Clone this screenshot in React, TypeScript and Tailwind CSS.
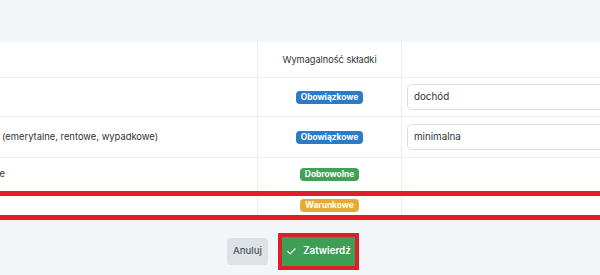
import React from "react";
import { Check } from "lucide-react";

function Badge({ label, color }: { label: string; color: string }) {
  return (
    <span
      className={`${color} text-white text-[8.4px] font-bold leading-[13px] h-[13px] px-[5px] rounded-[4px] whitespace-nowrap`}>
      {label}
    </span>
  );
}

function Field({ value }: { value: string }) {
  return (
    <div className="ml-[5px] w-[220px] h-[26px] shrink-0 flex items-center px-[6px] border border-[#d9dee3] rounded-[5px] bg-white text-[9.8px] text-[#2f3337]">
      {value}
    </div>
  );
}

// tekst z pierwszej kolumny: koniec widoczny od lewej krawędzi
function Cut({ hidden, shown, edge }: { hidden: string; shown?: string; edge: string }) {
  return (
    <div className="flex items-center whitespace-nowrap text-[9.4px] text-[#2f3337]">
      <div className={`${edge} flex justify-end`}>{hidden}</div>
      {shown && <span className="ml-[2px]">{shown}</span>}
    </div>
  );
}

function Row({
  h,
  first,
  badge,
  field,
  last,
}: {
  h: string;
  first?: React.ReactNode;
  badge: React.ReactNode;
  field?: string;
  last?: boolean;
}) {
  return (
    <div
      className={`grid grid-cols-[258px_144px_1fr] ${h} ${last ? "" : "border-b border-[#eceff2]"}`}>
      <div className="flex items-center border-r border-[#eceff2]">{first}</div>
      <div className="flex items-center justify-center border-r border-[#eceff2]">{badge}</div>
      <div className="flex items-center overflow-hidden">{field && <Field value={field} />}</div>
    </div>
  );
}

export default function App() {
  return (
    <div className="w-[600px] h-[275px] overflow-hidden bg-[#f3f6f8] font-['Inter',sans-serif]">
      <div className="h-[42px]" />
      <div className="bg-white">
        <div className="grid grid-cols-[258px_144px_1fr] h-[36px] border-b border-[#eceff2]">
          <div className="border-r border-[#eceff2]" />
          <div className="flex items-center justify-center border-r border-[#eceff2] text-[9.2px] text-[#2f3337]">
            Wymagalność składki
          </div>
          <div />
        </div>
        <Row
          h="h-[39px]"
          first={<Cut hidden="Ubezpieczenie zdrowotne" edge="w-[0px]" />}
          badge={<Badge label="Obowiązkowe" color="bg-[#2b7bc6]" />}
          field="dochód"
        />
        <Row
          h="h-[41px]"
          first={
            <Cut
              hidden="Ubezpieczenia społeczne"
              shown="(emerytalne, rentowe, wypadkowe)"
              edge="w-[0px]"
            />
          }
          badge={<Badge label="Obowiązkowe" color="bg-[#2b7bc6]" />}
          field="minimalna"
        />
        <Row
          h="h-[33px]"
          first={<Cut hidden="Ubezpieczenie chorobowe" edge="w-[5px]" />}
          badge={<Badge label="Dobrowolne" color="bg-[#3ea257]" />}
          last
        />
        <div className="border-y-[5px] border-[#dc1f2b]">
          <Row
            h="h-[19px]"
            badge={<Badge label="Warunkowe" color="bg-[#e7a935]" />}
            last
          />
        </div>
      </div>
      <div className="flex items-center gap-[10px] pl-[227px] pt-[13px]">
        <button className="h-[27px] w-[41px] rounded-[4px] bg-[#dde2e7] text-[9.6px] font-medium text-[#4a545e]">
          Anuluj
        </button>
        <div className="border-4 border-[#dc1f2b]">
          <button className="h-[29px] w-[73px] flex items-center justify-center gap-[6px] bg-[#3d9e54] text-[9.8px] font-semibold text-white">
            <Check size={11} strokeWidth={2.5} />
            Zatwierdź
          </button>
        </div>
      </div>
    </div>
  );
}
